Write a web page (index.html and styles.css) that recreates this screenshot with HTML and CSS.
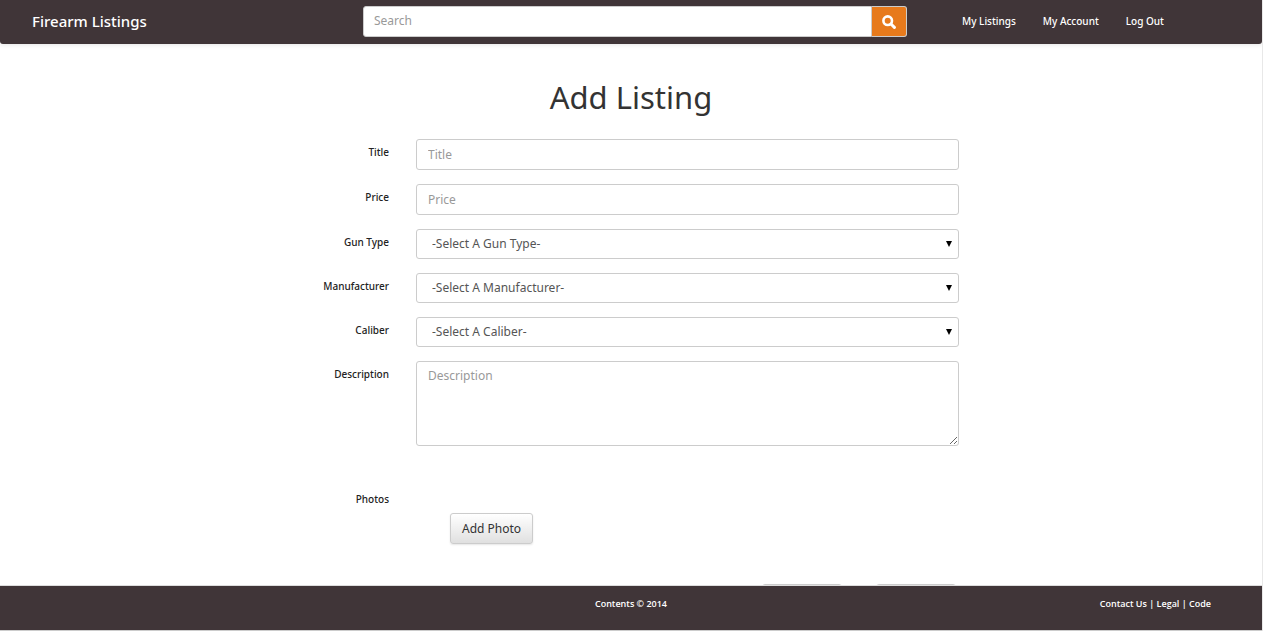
FILE: index.html
```html
<!DOCTYPE html>
<html lang="en">
<head>
<meta charset="utf-8">
<title>Add Listing</title>
<link rel="stylesheet" href="styles.css">
</head>
<body>
<header class="navbar">
  <a class="brand" href="#">Firearm Listings</a>
  <form class="search" role="search">
    <input class="search-input" type="search" placeholder="Search" aria-label="Search">
    <button class="search-button" type="submit" aria-label="Search">
      <svg width="14" height="14" viewBox="0 0 14 14" aria-hidden="true"><circle cx="5.7" cy="5.7" r="4.3" fill="none" stroke="#fff" stroke-width="2.6"/><path d="M9 9l3.4 3.4" stroke="#fff" stroke-width="3" stroke-linecap="round"/></svg>
    </button>
  </form>
  <nav class="nav">
    <a href="#">My Listings</a>
    <a href="#">My Account</a>
    <a href="#">Log Out</a>
  </nav>
</header>
<main class="content">
  <h1 class="heading">Add Listing</h1>
  <form class="listing">
    <div class="row"><label for="title">Title</label><input class="field" id="title" type="text" placeholder="Title"></div>
    <div class="row"><label for="price">Price</label><input class="field" id="price" type="text" placeholder="Price"></div>
    <div class="row"><label for="type">Gun Type</label><div class="select"><select class="field" id="type"><option>-Select A Gun Type-</option></select></div></div>
    <div class="row"><label for="maker">Manufacturer</label><div class="select"><select class="field" id="maker"><option>-Select A Manufacturer-</option></select></div></div>
    <div class="row"><label for="caliber">Caliber</label><div class="select"><select class="field" id="caliber"><option>-Select A Caliber-</option></select></div></div>
    <div class="row"><label for="description">Description</label><textarea class="field area" id="description" placeholder="Description"></textarea></div>
    <div class="row photos"><label for="photo">Photos</label><div class="photo-list"><button class="button" id="photo" type="button">Add Photo</button></div></div>
    <div class="row actions"><div class="action-list"><button class="button action" type="reset"></button><button class="button action" type="submit"></button></div></div>
  </form>
</main>
<footer class="footer">
  <span class="copyright">Contents © 2014</span>
  <span class="links"><a href="#">Contact Us</a> | <a href="#">Legal</a> | <a href="#">Code</a></span>
</footer>
</body>
</html>
```
FILE: styles.css
```css
* { box-sizing: border-box; }
body {
  margin: 0;
  height: 100vh;
  display: flex;
  flex-direction: column;
  overflow: hidden;
  border-right: 1px solid #e8e8e8;
  background: #fff;
  color: #333;
  font: 12px/20px "Noto Sans", "Open Sans", sans-serif;
}
a { color: inherit; text-decoration: none; }
input, select, textarea, button { font: inherit; margin: 0; }
.navbar {
  flex: none;
  display: grid;
  grid-template-columns: 363fr 544fr 355fr;
  height: 44px;
  padding-bottom: 1px;
  align-items: center;
  background: #403538;
  color: #fff;
  border-radius: 0 0 3px 3px;
  box-shadow: 0 1px 4px rgba(0, 0, 0, .1);
}
.brand { padding: 0 0 2px 32px; font-size: 15px; font-weight: 500; }
.search { display: flex; height: 31px; }
.search-input {
  flex: 1;
  min-width: 0;
  padding: 0 10px 2px;
  border: 1px solid #ccc;
  border-radius: 3px 0 0 3px;
  background: #fff;
  appearance: none;
}
::placeholder { color: #999; opacity: 1; }
.search-button {
  width: 35px;
  padding: 0;
  display: flex;
  align-items: center;
  justify-content: center;
  border: 1px solid #ccc;
  border-left: 0;
  border-radius: 0 3px 3px 0;
  background: #e77a1c;
}
.nav { display: flex; gap: 27px; padding: 0 0 2px 55px; font-size: 10px; font-weight: 500; white-space: nowrap; }
.content { flex: 1; min-height: 0; overflow: hidden; }
.heading {
  margin: 33px 0 22px;
  text-align: center;
  font-size: 31px;
  line-height: 40px;
  font-weight: 400;
}
.listing { display: flex; flex-direction: column; gap: 14px; }
.row { display: grid; grid-template-columns: 389fr 543fr 276fr; column-gap: 27px; align-items: start; }
.row label { padding-top: 3px; text-align: right; font-size: 10px; font-weight: 500; color: #222; }
.field {
  display: block;
  width: 100%;
  height: 31px;
  padding: 0 11px;
  border: 1px solid #ccc;
  border-radius: 3px;
  background: #fff;
  color: #555;
}
.select { position: relative; }
.select .field { height: 30px; padding: 0 15px; appearance: none; }
.select::after {
  content: "";
  position: absolute;
  right: 7px;
  top: 12px;
  border: 3px solid transparent;
  border-top: 6px solid #000;
  border-bottom: 0;
  pointer-events: none;
}
.area { height: 85px; padding: 4px 11px; resize: vertical; }
.photos { margin-top: 26px; }
.photo-list { padding: 27px 0 0 34px; }
.button {
  height: 31px;
  padding: 0 11px;
  border: 1px solid #ccc;
  border-radius: 3px;
  background: linear-gradient(#fff, #e0e0e0);
  box-shadow: 0 1px 2px rgba(0, 0, 0, .1);
  color: #333;
  display: block;
}
.actions { margin-top: 26px; }
.action-list { grid-column: 2; display: flex; justify-content: flex-end; gap: 34px; padding-right: 3px; }
.action { width: 80px; }
.footer {
  flex: none;
  display: grid;
  grid-template-columns: 1fr auto 1fr;
  height: 46px;
  padding: 8px 51px 0;
  border-top: 1px solid #ddd;
  border-bottom: 1px solid #ccc;
  background: #403538;
  color: #fff;
  font-family: "Open Sans", "Noto Sans", sans-serif;
  font-size: 9px;
  font-weight: 600;
}
.copyright { grid-column: 2; }
.links { text-align: right; }
```
